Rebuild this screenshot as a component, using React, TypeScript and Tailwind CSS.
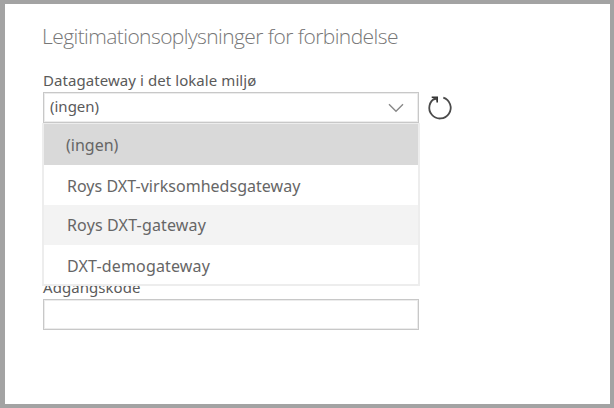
const options = [
  { label: '(ingen)', row: 'h-[41px] bg-[#d9d9d9] pl-[22px]', text: 'tracking-[0px]' },
  { label: 'Roys DXT-virksomhedsgateway', row: 'h-10 bg-white pl-[23px] pt-px', text: 'tracking-[0.03px]' },
  { label: 'Roys DXT-gateway', row: 'h-10 bg-[#f3f3f3] pl-[23px]', text: 'tracking-[0.16px]' },
  { label: 'DXT-demogateway', row: 'h-[39px] bg-white pl-[23px] pt-[2px]', text: 'tracking-[0.16px]' },
];

function Chevron() {
  return (
    <svg className="h-[10px] w-[16px]" viewBox="0 0 16 10" fill="none">
      <path d="M1 1.2L8 8.2L15 1.2" stroke="#888" strokeWidth="1.4" />
    </svg>
  );
}

function Refresh() {
  return (
    <svg className="h-[26px] w-[26px]" viewBox="0 0 26 26" fill="none">
      <path d="M16.3 2.6A10.7 10.7 0 1 1 8.4 3.1" stroke="#4a4a4a" strokeWidth="1.8" />
      <path d="M4.7 2.2H10.2V7.4" stroke="#333" strokeWidth="1.6" />
      <path d="M7.2 2.4H10.2V6L8.5 4.8L6.6 5.4Z" fill="#444" />
    </svg>
  );
}

export default function App() {
  return (
    <main className="flex h-[408px] w-[614px] bg-[#a3a3a3] pb-1 pl-[5px] pr-1 pt-1 font-['Noto_Sans','Open_Sans',sans-serif] text-[#5a5a5a]">
      <section className="flex flex-1 flex-col bg-white pl-[38px] pt-[17px]">
        <h1 className="-ml-px h-[30px] whitespace-nowrap font-['Open_Sans',sans-serif] text-[21px] font-light leading-[30px] tracking-[-0.58px] text-[#777]">
          Legitimationsoplysninger for forbindelse
        </h1>
        <label className="mt-[18px] h-[23px] whitespace-nowrap text-[15px] leading-[22px] tracking-[0.07px]">
          Datagateway i det lokale miljø
        </label>
        <div className="flex items-center gap-[8px]">
          <div className="relative h-[31px] w-[376px]">
            <button className="flex h-full w-full items-center justify-between border border-[#c8c8c8] bg-white pl-[6px] pr-[14px] text-left shadow-[inset_0_0_0_1px_#ececec]">
              <span className="pb-[3px] text-[15px] leading-[22px] tracking-[0px]">(ingen)</span>
              <Chevron />
            </button>
            <ul className="absolute -left-px top-[31px] z-10 w-[378px] border-2 border-t-[1px] border-[#ededed] bg-white text-[16px] text-[#666]">
              {options.map((option) => (
                <li key={option.label} className={`flex items-center whitespace-nowrap ${option.row}`}>
                  <span className={option.text}>{option.label}</span>
                </li>
              ))}
            </ul>
          </div>
          <Refresh />
        </div>
        <label className="mt-[153px] h-[22px] text-[15px] leading-[22px] tracking-[0.05px]">Adgangskode</label>
        <div className="mt-px h-[31px] w-[376px] border border-[#c8c8c8] bg-white shadow-[inset_0_0_0_1px_#ececec]" />
      </section>
    </main>
  );
}
